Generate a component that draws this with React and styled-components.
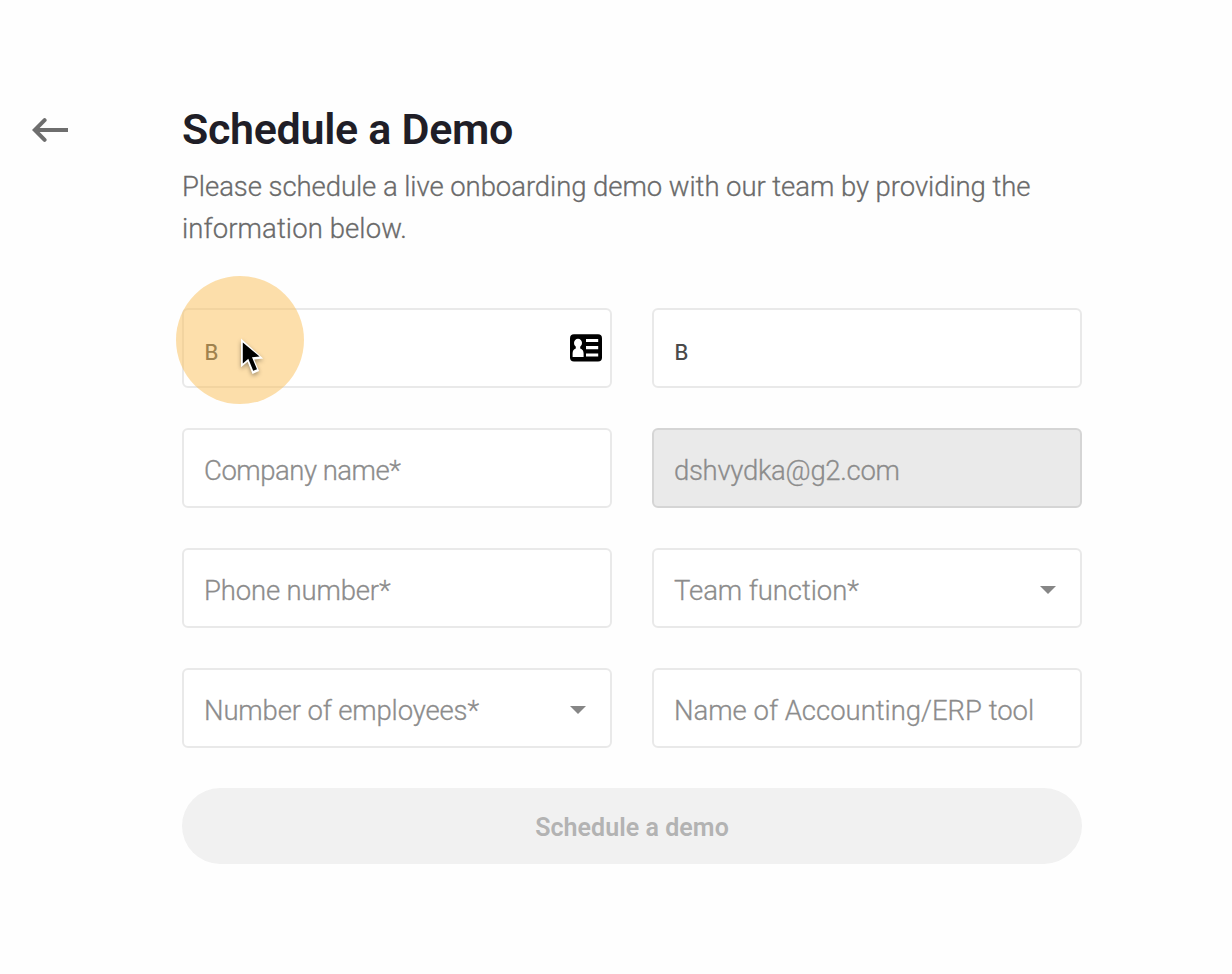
import styled, { createGlobalStyle } from 'styled-components';

const fields = [
  { name: 'firstName', text: 'B', filled: true, contact: true },
  { name: 'lastName', text: 'B', filled: true },
  { name: 'company', text: 'Company name*', spacing: -0.48 },
  { name: 'email', text: 'dshvydka@g2.com', disabled: true, spacing: -0.3 },
  { name: 'phone', text: 'Phone number*', spacing: -0.16 },
  { name: 'team', text: 'Team function*', select: true, spacing: -0.08 },
  { name: 'employees', text: 'Number of employees*', select: true, spacing: -0.15 },
  { name: 'erp', text: 'Name of Accounting/ERP tool', spacing: -0.02 },
];

function ContactIcon() {
  return (
    <StyledContactIcon width="32" height="28" viewBox="0 0 32 28">
      <rect x="0" y="0.3" width="32" height="27.2" rx="4" fill="#000" />
      <ellipse cx="8" cy="9" rx="4" ry="4.3" fill="#fff" />
      <path d="M5.8 12h4.4v2.6c2.3.8 3.4 2.4 3.4 5V23H2.6v-3.4c0-2.6 1-4.2 3.2-5z" fill="#fff" />
      <path d="M16 5h12.2v3H16zM16 12h12.2v3.2H16zM16 19.6h12.2v3H16z" fill="#fff" />
    </StyledContactIcon>
  );
}

function App() {
  return (
    <>
      <GlobalStyle />
      <StyledPage>
        <StyledBack aria-label="Back">
          <svg width="36" height="26" viewBox="0 0 36 26">
            <path d="M36 13H3" fill="none" stroke="#6e6e6e" strokeWidth="4" />
            <path d="M12.6 3.2L2.8 13l9.8 9.8" fill="none" stroke="#6e6e6e" strokeWidth="4" strokeLinecap="round" />
          </svg>
        </StyledBack>
        <StyledMain>
          <StyledTitle>Schedule a Demo</StyledTitle>
          <StyledIntro>
            <StyledLine $spacing={-0.06}>Please schedule a live onboarding demo with our team by providing the</StyledLine>
            <StyledLine $spacing={0.1}>information below.</StyledLine>
          </StyledIntro>
          <StyledForm>
            {fields.map((field) => (
              <StyledField key={field.name} $disabled={field.disabled} $contact={field.contact}>
                {field.filled ? (
                  <StyledValue>{field.text}</StyledValue>
                ) : (
                  <StyledPlaceholder $spacing={field.spacing}>{field.text}</StyledPlaceholder>
                )}
                {field.contact && <ContactIcon />}
                {field.select && <StyledCaret />}
              </StyledField>
            ))}
          </StyledForm>
          <StyledButton disabled>Schedule a demo</StyledButton>
        </StyledMain>
        <StyledHighlight />
        <StyledCursor width="32" height="44" viewBox="0 0 32 44">
          <path d="M5 2.5v28.7l6.6-5.4 4.9 12.1 6.6-2.9-4.9-11.5 9-.9z" fill="#fff" />
          <path d="M6.8 6.5v21l5.5-4.8 4.9 12.1 3.8-1.6-5-12 7.6-.6z" fill="#000" />
        </StyledCursor>
      </StyledPage>
    </>
  );
}

export default App;

const GlobalStyle = createGlobalStyle`
  * {
    box-sizing: border-box;
  }

  body {
    margin: 0;
    background-color: #fefefe;
    font-family: Roboto, 'Liberation Sans', sans-serif;
  }
`;

const StyledPage = styled.div`
  position: relative;
  display: flex;
  align-items: flex-start;
  height: 974px;
  padding: 104px 0 0 32px;
  overflow: hidden;
`;

const StyledBack = styled.button`
  display: flex;
  width: 150px;
  margin-top: 13px;
  padding: 0;
  border: none;
  background: none;
`;

const StyledMain = styled.main`
  width: 900px;
`;

const StyledTitle = styled.h1`
  margin: 0;
  font-size: 43px;
  font-weight: 600;
  line-height: 50px;
  letter-spacing: -0.3px;
  color: #201e27;
  white-space: nowrap;
`;

const StyledIntro = styled.p`
  margin: 12px 0 0;
  height: 84px;
  font-size: 27.5px;
  font-weight: 300;
  line-height: 42px;
  color: #6a6a6a;
  -webkit-text-stroke: 0.3px #6a6a6a;
`;

const StyledLine = styled.span`
  display: block;
  letter-spacing: ${(props) => props.$spacing}px;
  white-space: nowrap;
`;

const StyledForm = styled.div`
  display: grid;
  grid-template-columns: 430px 430px;
  grid-auto-rows: 80px;
  gap: 40px;
  margin-top: 58px;
`;

const StyledField = styled.div`
  display: flex;
  align-items: center;
  justify-content: space-between;
  padding: 4px ${(props) => (props.$contact ? 8 : 24)}px 0 20px;
  border: 2px solid ${(props) => (props.$disabled ? '#d5d5d5' : '#e9e9e9')};
  border-radius: 6px;
  background-color: ${(props) => (props.$disabled ? '#eaeaea' : '#fff')};
`;

const StyledContactIcon = styled.svg`
  margin-bottom: 4px;
`;

const StyledPlaceholder = styled.span`
  font-size: 27.5px;
  font-weight: 300;
  letter-spacing: ${(props) => props.$spacing}px;
  color: #8c8c8c;
  white-space: nowrap;
  -webkit-text-stroke: 0.3px #8c8c8c;
`;

const StyledValue = styled.span`
  padding: 4px 0 0 0.5px;
  font-family: Inter, 'Liberation Sans', sans-serif;
  font-size: 21px;
  font-weight: 500;
  color: #4a4a4a;
`;

const StyledCaret = styled.span`
  border: 8px solid transparent;
  border-top: 8px solid #868686;
  border-bottom: none;
`;

const StyledButton = styled.button`
  display: block;
  width: 100%;
  height: 76px;
  margin-top: 40px;
  padding: 2px 0 0;
  border: none;
  border-radius: 38px;
  background-color: #f1f1f1;
  font-family: inherit;
  font-size: 25px;
  font-weight: 600;
  letter-spacing: 0.05px;
  color: #b3b3b3;
`;

const StyledHighlight = styled.div`
  position: absolute;
  top: 276px;
  left: 176px;
  width: 128px;
  height: 128px;
  border-radius: 50%;
  background-color: rgba(251, 190, 84, 0.49);
`;

const StyledCursor = styled.svg`
  position: absolute;
  top: 336px;
  left: 236px;
  filter: drop-shadow(0 2px 2px rgba(0, 0, 0, 0.35));
`;
